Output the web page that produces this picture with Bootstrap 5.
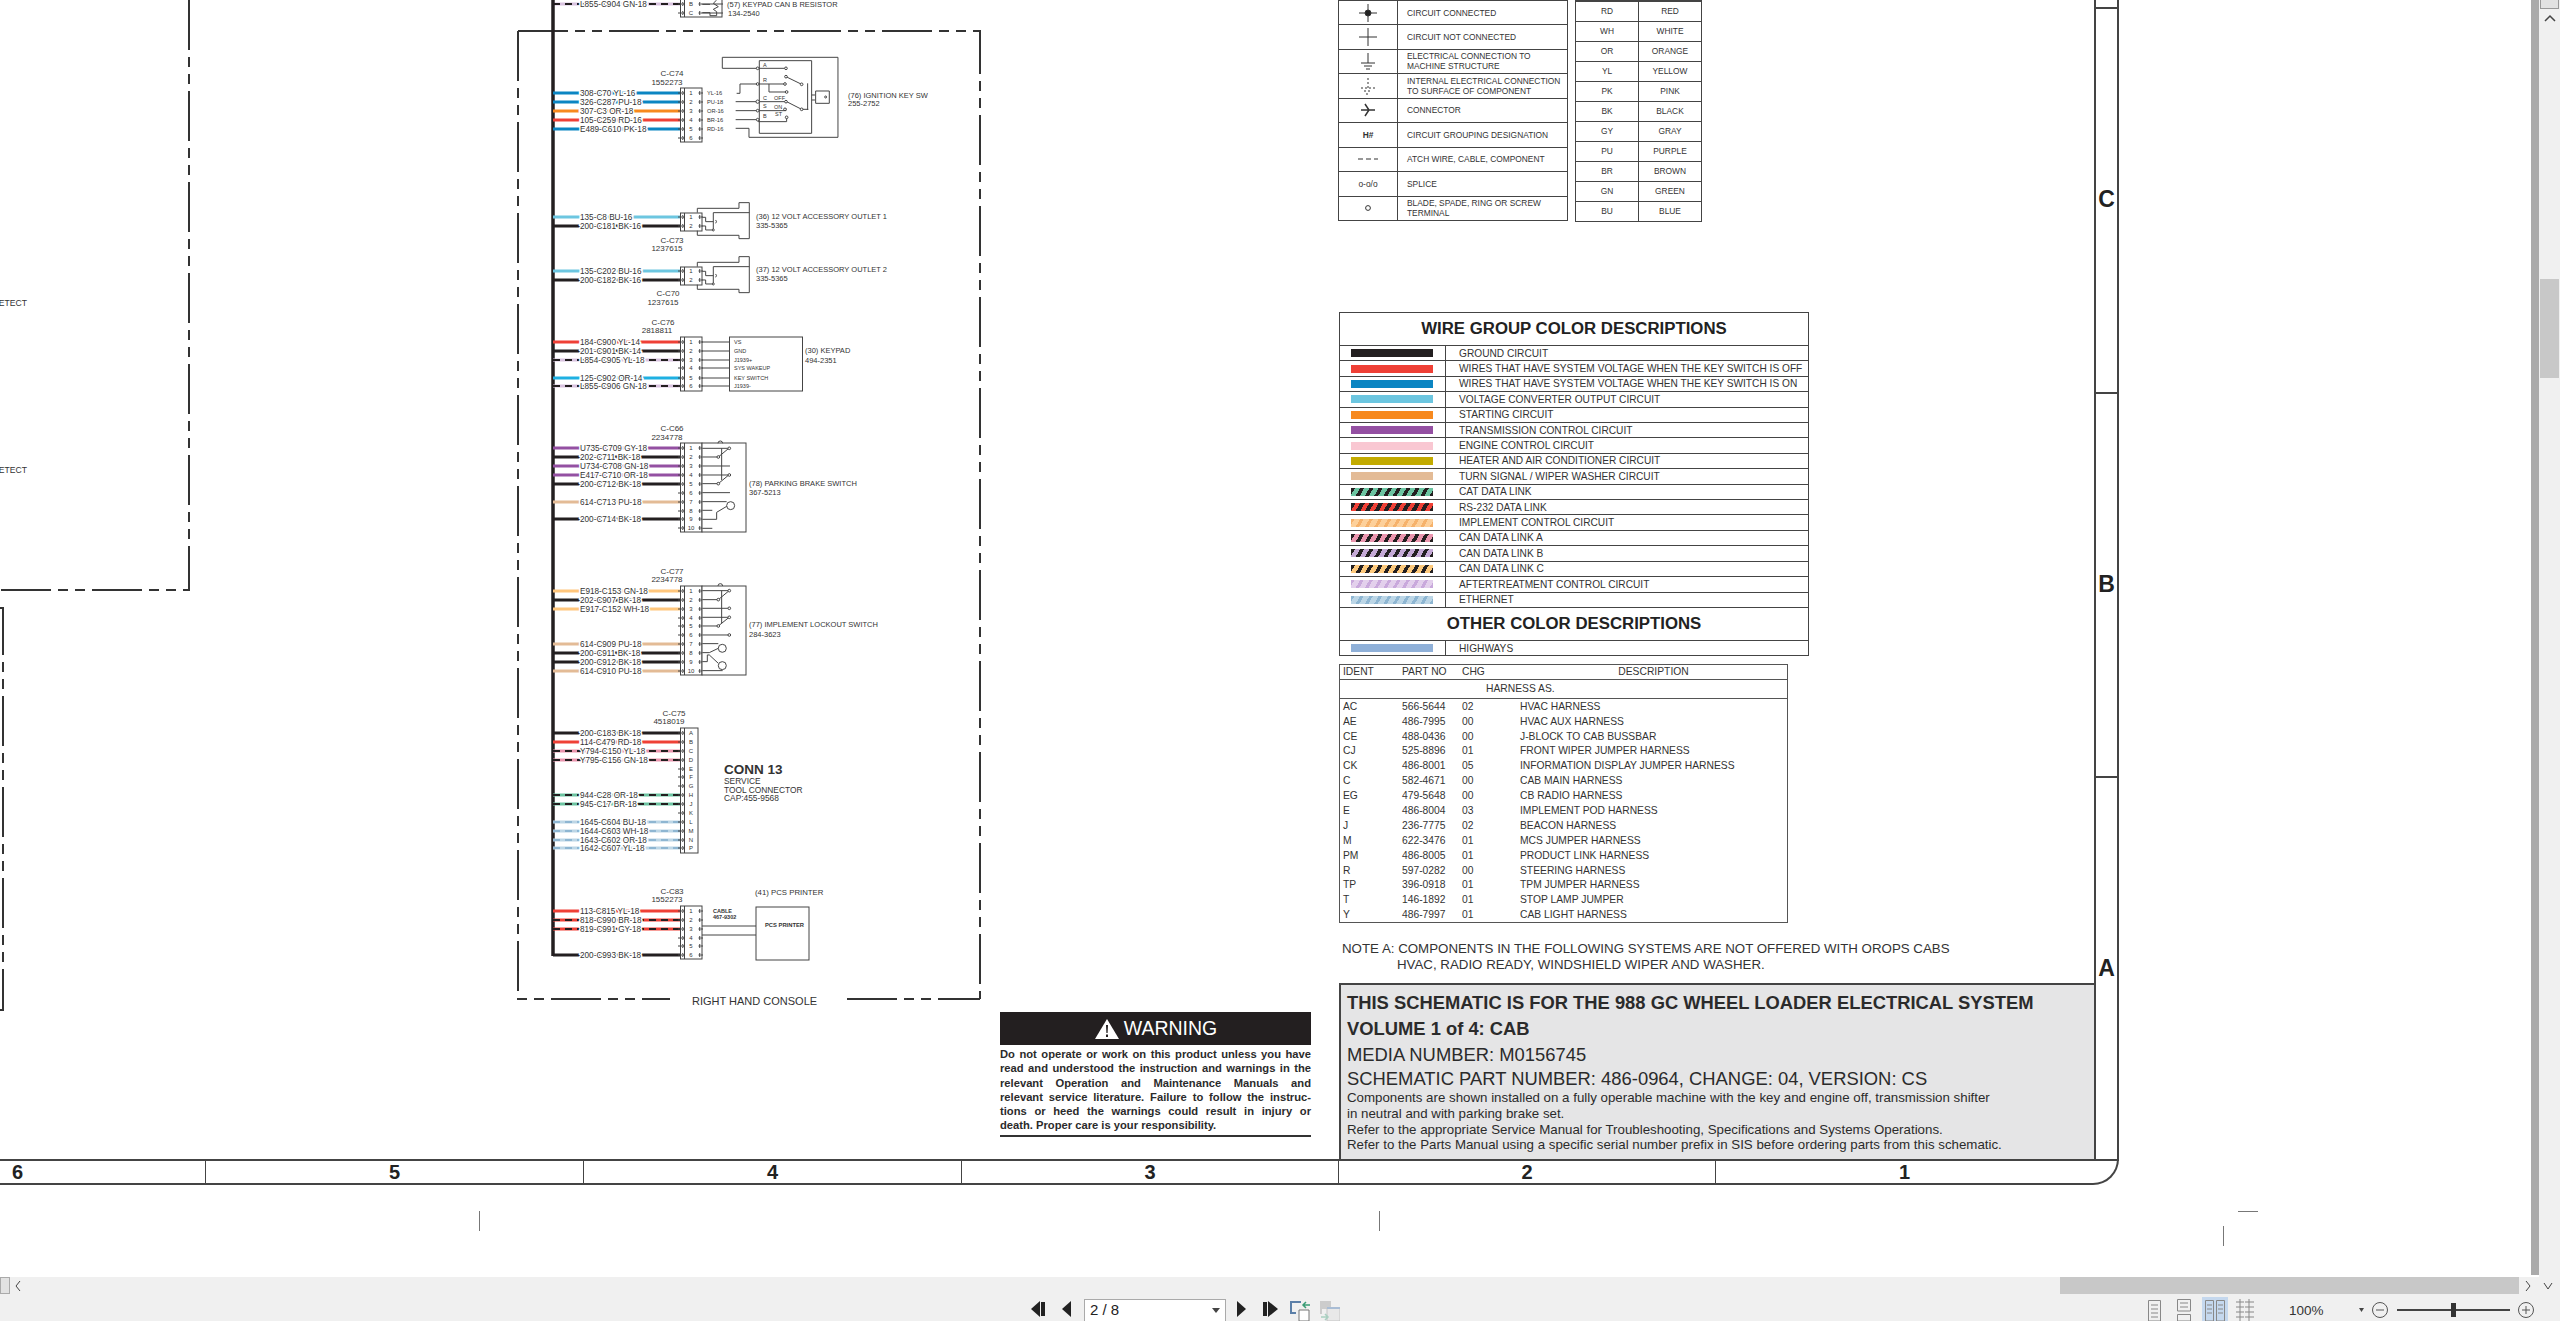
<!DOCTYPE html>
<html lang="en">
<head>
<meta charset="UTF-8">
<meta name="viewport" content="width=device-width, initial-scale=1.0">
<title>988 GC Wheel Loader Electrical System - Volume 1 of 4</title>
<link href="https://cdn.jsdelivr.net/npm/bootstrap@5.3.0/dist/css/bootstrap.min.css" rel="stylesheet">
<style>
    body { font-family: "Liberation Sans", Arial, sans-serif; color: #333; background: #fff; }
    .sheet { background: #fff; }
    .sheet-svg { position: absolute; left: 0; top: 0; }
    .sheet-svg text { font-family: "Liberation Sans", Arial, sans-serif; fill: #333; }
    .on-sheet { position: absolute; }

    /* symbol + colour code tables */
    .pos-sym { left: 1338px; top: -1px; width: 230px; }
    .pos-code { left: 1575px; top: 0; width: 127px; }
    .sym-tbl { border-collapse: collapse; table-layout: fixed; font-size: 8.4px; line-height: 10px; color: #333; }
    .sym-tbl td { border: 1px solid #444; padding: 0; vertical-align: middle; background: #fff; color: #333; }
    .pos-sym tr { height: 24.5px; }
    .pos-code tr { height: 20px; }
    .sym-ico { width: 59px; text-align: center; }
    .sym-txt { padding-left: 9px !important; }
    .pos-code td { text-align: center; width: 50%; }
    .top-thick td { border-top: 2px solid #444; }

    /* wire group table */
    .pos-wire { left: 1339px; top: 312px; width: 470px; border: 1px solid #444; font-size: 10.16px; }
    .wire-head { height: 32px; font-size: 16.8px; font-weight: 700; color: #222; }
    .wire-row { height: 15.41px; border-top: 1px solid #444; }
    .wire-swatch { width: 106px; height: 100%; border-right: 1px solid #444; padding-left: 11px; }
    .wire-swatch span { display: block; width: 82px; height: 8px; }
    .wire-name { padding-left: 13px; white-space: nowrap; }
    .wire-head.other { height: 33px; border-top: 1px solid #444; }
    .sw-gnd { background: #231f20; } .sw-off { background: #ef4036; } .sw-on { background: #0b85c2; }
    .sw-conv { background: #6cc6e0; } .sw-start { background: #f7891e; } .sw-trans { background: #9450a2; }
    .sw-eng { background: #f9c7d2; } .sw-hvac { background: #c3ab00; } .sw-turn { background: #e3bb96; }
    .sw-high { background: #8fb0d8; }
    .sw-cat { background: repeating-linear-gradient(120deg, #231f20 0 3.5px, #6cc4a1 3.5px 8px); }
    .sw-rs { background: repeating-linear-gradient(120deg, #231f20 0 4px, #ef4036 4px 8px); }
    .sw-impl { background: repeating-linear-gradient(120deg, #f6b26b 0 3px, #fdd09a 3px 8px); }
    .sw-cana { background: repeating-linear-gradient(120deg, #231f20 0 3.5px, #ea95ae 3.5px 8px); }
    .sw-canb { background: repeating-linear-gradient(120deg, #231f20 0 3.5px, #c5a9d6 3.5px 8px); }
    .sw-canc { background: repeating-linear-gradient(120deg, #231f20 0 3.5px, #fdc97c 3.5px 8px); }
    .sw-after { background: repeating-linear-gradient(120deg, #c9a9dc 0 3px, #e3d0ec 3px 8px); }
    .sw-eth { background: repeating-linear-gradient(120deg, #8eb6d2 0 3px, #bcd6e6 3px 8px); }

    /* harness table */
    .pos-harn { left: 1339px; top: 664px; width: 449px; height: 259px; border: 1px solid #555; font-size: 10.3px; }
    .harn-top { height: 15px; border-bottom: 1px solid #555; }
    .harn-sub { height: 19px; border-bottom: 1px solid #555; padding-left: 146px; }
    .harn-row { height: 14.9px; white-space: nowrap; }
    .c-ident { width: 62px; padding-left: 3px; }
    .c-part { width: 60px; }
    .c-chg { width: 58px; }

    .pos-note { left: 1342px; top: 941px; font-size: 13.3px; line-height: 16px; white-space: nowrap; }
    .note-2 { padding-left: 55px; }

    /* warning */
    .pos-warn { left: 1000px; top: 1012px; width: 311px; border-bottom: 2px solid #333; height: 125px; }
    .warn-head { height: 33px; background: #231f20; color: #fff; font-size: 19.5px; }
    .warn-body { font-size: 11.2px; line-height: 14.3px; font-weight: 700; color: #2b2b2b; padding-top: 2px; white-space: nowrap; }
    .warn-fill { text-align: justify; text-align-last: justify; white-space: normal; }

    /* title block */
    .pos-info { left: 1339px; top: 983px; width: 757px; height: 178px; background: #e5e5e6; border: 2px solid #444; padding: 5px 5px 0 6px; color: #2b2b2b; white-space: nowrap; }
    .info-b { font-size: 18.37px; font-weight: 700; line-height: 25px; }
    .info-b2 { line-height: 27px; }
    .info-m { font-size: 18.4px; line-height: 26px; }
    .info-l { font-size: 18.4px; line-height: 22px; }
    .info-s { font-size: 13.3px; line-height: 15.8px; }

    /* sheet frame */
    .pos-strip { left: -2px; top: 1159px; width: 2121px; height: 26px; border: 2px solid #444; border-bottom-right-radius: 26px; border-left: 0; font-size: 20px; font-weight: 700; color: #222; }
    .strip-cell { border-right: 1px solid #444; height: 100%; }
    .strip-first { padding-left: 14px; }
    .strip-last { padding-right: 24px; border-right: 0; }
    .pos-frame { left: 2094px; top: -10px; width: 25px; height: 1171px; border-left: 2px solid #444; border-right: 2px solid #444; font-size: 23px; font-weight: 700; color: #222; }
    .zone { border-top: 2px solid #444; height: 385px; padding-bottom: 2px; }
    .zone-top { height: 17px; border-top: 0; }
    .tick { position: absolute; background: #777; width: 1px; height: 20px; }

    /* viewer chrome */
    .vstrip { width: 8px; background: #aaa; height: 1275px; }
    .vscroll { width: 21px; background: #f0f0f0; padding: 0 1px; }
    .vs-btn { height: 9px; background: #e2e2e2; border: 1px solid #999; border-top: 0; }
    .vs-up { height: 18px; }
    .vs-thumb { height: 99px; background: #c8c8c8; margin-top: 252px; }
    .chrome { background: #f0f0f0; }
    .hscroll { height: 17px; }
    .hs-btn { width: 10px; height: 17px; background: #e2e2e2; border: 1px solid #aaa; }
    .hs-thumb { width: 459px; height: 17px; background: #c8c8c8; }
    .hs-gap { flex: 1; }
    .hs-next { margin-left: 5px; }
    .hs-down { margin: 0 7px 0 11px; }
    .toolbar { height: 27px; padding-left: 1031px; padding-right: 24px; }
    .pager { width: 142px; height: 22px; background: #fff; border: 1px solid #aaa; border-bottom: 0; font-size: 15px; color: #222; padding: 1px 5px; }
    .ml-1 { margin-left: 16px; } .ml-2 { margin-left: 13px; } .ml-3 { margin-left: 11px; }
    .ml-4 { margin-left: 17px; } .ml-5 { margin-left: 12px; } .ml-6 { margin-left: 10px; }
    .zoom-val { margin-left: 31px; width: 38px; font-size: 13.5px; color: #333; }
    .zoom-box { margin-left: 29px; margin-bottom: 2px; }
</style>
</head>
<body class="d-flex flex-column vh-100 overflow-hidden">

<div class="d-flex flex-grow-1 overflow-hidden">
    <div class="sheet flex-grow-1 position-relative overflow-hidden">
        <svg class="sheet-svg" id="diagram" width="2531" height="1277" viewBox="0 0 2531 1277"></svg>

        <table class="on-sheet pos-sym sym-tbl" id="symTable"></table>
        <table class="on-sheet pos-code sym-tbl" id="codeTable"></table>

        <div class="on-sheet pos-wire" id="wireTable"></div>
        <div class="on-sheet pos-harn" id="harnTable"></div>

        <div class="on-sheet pos-note">
            <div>NOTE A: COMPONENTS IN THE FOLLOWING SYSTEMS ARE NOT OFFERED WITH OROPS CABS</div>
            <div class="note-2">HVAC, RADIO READY, WINDSHIELD WIPER AND WASHER.</div>
        </div>

        <div class="on-sheet pos-warn">
            <div class="warn-head d-flex align-items-center justify-content-center gap-1">
                <svg width="26" height="22" viewBox="0 0 26 22"><path d="M13 1 L25 21 H1 Z" fill="#fff"/><path d="M12 7 h2 l-.4 8 h-1.2 Z M12 16.5 h2 v2.5 h-2 Z" fill="#231f20"/></svg>
                <span>WARNING</span>
            </div>
            <div class="warn-body">
                <div class="warn-fill">Do not operate or work on this product unless you have</div>
                <div class="warn-fill">read and understood the instruction and warnings in the</div>
                <div class="warn-fill">relevant Operation and Maintenance Manuals and</div>
                <div class="warn-fill">relevant service literature. Failure to follow the instruc-</div>
                <div class="warn-fill">tions or heed the warnings could result in injury or</div>
                <div>death. Proper care is your responsibility.</div>
            </div>
        </div>

        <div class="on-sheet pos-info">
            <div class="info-b">THIS SCHEMATIC IS FOR THE 988 GC WHEEL LOADER ELECTRICAL SYSTEM</div>
            <div class="info-b info-b2">VOLUME 1 of 4: CAB</div>
            <div class="info-m">MEDIA NUMBER: M0156745</div>
            <div class="info-l">SCHEMATIC PART NUMBER: 486-0964, CHANGE: 04, VERSION: CS</div>
            <div class="info-s">Components are shown installed on a fully operable machine with the key and engine off, transmission shifter</div>
            <div class="info-s">in neutral and with parking brake set.</div>
            <div class="info-s">Refer to the appropriate Service Manual for Troubleshooting, Specifications and Systems Operations.</div>
            <div class="info-s">Refer to the Parts Manual using a specific serial number prefix in SIS before ordering parts from this schematic.</div>
        </div>

        <div class="on-sheet pos-frame d-flex flex-column">
            <div class="zone zone-top"></div>
            <div class="zone d-flex align-items-center justify-content-center">C</div>
            <div class="zone d-flex align-items-center justify-content-center">B</div>
            <div class="zone d-flex align-items-center justify-content-center">A</div>
        </div>

        <div class="on-sheet pos-strip d-flex">
            <div class="strip-cell strip-first d-flex align-items-center" id="cell6">6</div>
            <div class="strip-cell d-flex align-items-center justify-content-center" id="cell5">5</div>
            <div class="strip-cell d-flex align-items-center justify-content-center" id="cell4">4</div>
            <div class="strip-cell d-flex align-items-center justify-content-center" id="cell3">3</div>
            <div class="strip-cell d-flex align-items-center justify-content-center" id="cell2">2</div>
            <div class="strip-cell strip-last d-flex align-items-center justify-content-center flex-grow-1">1</div>
        </div>

        <span class="tick" id="t1"></span><span class="tick" id="t2"></span><span class="tick" id="t3"></span><span class="tick" id="t4"></span>
    </div>
    <div class="vstrip"></div>
    <div class="vscroll">
        <div class="vs-btn"></div>
        <div class="vs-up d-flex align-items-center justify-content-center"><svg width="12" height="8" viewBox="0 0 12 8"><path d="M1 7 L6 2 L11 7" fill="none" stroke="#444" stroke-width="1.5"/></svg></div>
        <div class="vs-thumb"></div>
    </div>
</div>

<div class="chrome">
    <div class="hscroll d-flex align-items-center">
        <div class="hs-btn"></div>
        <svg class="ms-1" width="8" height="12" viewBox="0 0 8 12"><path d="M6 1 L2 6 L6 11" fill="none" stroke="#444" stroke-width="1"/></svg>
        <div class="hs-gap"></div>
        <div class="hs-thumb"></div>
        <svg class="hs-next" width="8" height="12" viewBox="0 0 8 12"><path d="M2 1 L6 6 L2 11" fill="none" stroke="#444" stroke-width="1"/></svg>
        <svg class="hs-down" width="10" height="8" viewBox="0 0 10 8"><path d="M1 1 L5 7 L9 1" fill="none" stroke="#444" stroke-width="1"/></svg>
    </div>
    <div class="toolbar d-flex align-items-end">
        <svg class="mb-1" width="15" height="16" viewBox="0 0 15 16"><path d="M9 0 V16 L0 8 Z M10 1 H14 V15 H10 Z" fill="#222"/></svg>
        <svg class="mb-1 ml-1" width="9" height="16" viewBox="0 0 9 16"><path d="M9 0 V16 L0 8 Z" fill="#222"/></svg>
        <div class="pager ml-2 d-flex align-items-center justify-content-between">
            <span>2 / 8</span>
            <svg width="8" height="5" viewBox="0 0 8 5"><path d="M0 0 H8 L4 5 Z" fill="#444"/></svg>
        </div>
        <svg class="mb-1 ml-3" width="9" height="16" viewBox="0 0 9 16"><path d="M0 0 V16 L9 8 Z" fill="#222"/></svg>
        <svg class="mb-1 ml-4" width="15" height="16" viewBox="0 0 15 16"><path d="M5 0 V16 L15 8 Z M0 1 H4 V15 H0 Z" fill="#222"/></svg>
        <svg class="ml-5" width="20" height="21" viewBox="0 0 20 21">
            <path d="M0 1 H11 V3 H2 V12 H6 V14 H0 Z" fill="#5b7fa8"/><path d="M9 10 H19 V21 H9 Z" fill="#fff" stroke="#777"/><path d="M20 5 H13 M16 2 L13 5 L16 8" fill="none" stroke="#3a9c75" stroke-width="1.5"/>
        </svg>
        <svg class="ml-6" width="20" height="21" viewBox="0 0 20 21">
            <path d="M0 1 H11 V9 H2 V14 H0 Z" fill="#ccc"/><path d="M7 8 H20 V21 H7 Z" fill="#e8e8e8" stroke="#c4c4c4"/><path d="M7 8 H20" stroke="#a9bdd5" stroke-width="2"/><path d="M1 17 H8 M5 14 L8 17 L5 20" fill="none" stroke="#a9cfc0" stroke-width="1.5"/>
        </svg>

        <svg class="ms-auto" width="112" height="24" viewBox="0 0 112 24">
            <rect x="56" y="0" width="26" height="24" fill="#c5d8ee"/>
            <g fill="none" stroke="#888">
                <path d="M2.5 3.5 H14.5 V24 H2.5 Z M5 8 H12 M5 12 H12 M5 16 H12 M5 20 H12"/>
                <path d="M31.5 2.5 H44.5 V14 H31.5 Z M31.5 17.5 H44.5 V24 H31.5 Z M34 6 H42 M34 10 H42"/>
                <path d="M59.5 3.5 H67.5 V24 H59.5 Z M70.5 3.5 H78.5 V24 H70.5 Z M61 8 H66 M61 12 H66 M61 16 H66 M72 8 H77 M72 12 H77 M72 16 H77"/>
                <path d="M94 2 V24 M103 2 V24 M90 5 H98 M99 5 H108 M90 10 H98 M99 10 H108 M90 15 H98 M99 15 H108 M90 20 H98 M99 20 H108"/>
            </g>
        </svg>
        <span class="zoom-val">100%</span>
        <svg class="zoom-box" width="180" height="18" viewBox="0 0 180 18">
            <path d="M3 7 H8 L5.5 11 Z" fill="#444"/>
            <circle cx="24" cy="9" r="7.5" fill="none" stroke="#555"/><path d="M20 9 H28" stroke="#555"/>
            <path d="M41 9 H154" stroke="#444" stroke-width="2"/><rect x="95" y="2" width="5" height="14" fill="#333"/>
            <circle cx="170" cy="9" r="7.5" fill="none" stroke="#555"/><path d="M166 9 H174 M170 5 V13" stroke="#555"/>
        </svg>
    </div>
</div>

<script>
    // palette of the wire groups
    const C = {
        bk: '#231f20', rd: '#ef4036', bl: '#0b85c2', cy: '#6cc6e0', or: '#f7891e', pu: '#9450a2', tn: '#e3bb96',
        li: '#ffc67c', sky: '#1eb0e2', cana: '#ea95ae', canb: '#d9c3e0', cat: '#6cc4a1', eth: '#bcd6e6', rs: '#ef4036'
    };
    const LINE = '#444';
    const BLACK_DASH = '#231f20';
    let svg = '';

    function txt(x, y, s, size, extra) {
        svg += `<text x="${x}" y="${y}" dy=".35em" font-size="${size}" ${extra || ''}>${s}</text>`;
    }
    function wire(y, label, color, dashColor) {
        svg += `<path d="M553 ${y} H680" stroke="${color}" stroke-width="3" fill="none"/>`;
        if (dashColor) svg += `<path d="M553 ${y} H680" stroke="${dashColor}" stroke-width="1.8" stroke-dasharray="7 5" fill="none"/>`;
        svg += `<text x="580" y="${y}" dy=".35em" font-size="8.2" stroke="#fff" stroke-width="3" paint-order="stroke">${label}</text>`;
    }
    function connBox(top, bot, right, pinYs, names) {
        svg += `<g fill="none" stroke="${LINE}"><rect x="680.5" y="${top}" width="${right - 680.5}" height="${bot - top}" fill="#fff"/><path d="M684.5 ${top} V${bot}"/>`;
        pinYs.forEach(y => {
            svg += `<path d="M682.5 ${y - 2} q2 2 0 4 M678 ${y} H683"/>`;
            if (right > 699) svg += `<path d="M700 ${y - 2} q-2 2 0 4 M699 ${y} H${right + 1}"/>`;
        });
        svg += '</g>';
        pinYs.forEach((y, i) => txt(691, y, names ? names[i] : i + 1, 6, 'text-anchor="middle"'));
    }
    // device artwork drawn in the 3x crop coordinates it was measured from
    function art(ox, oy, d, circles) {
        svg += `<g transform="translate(${ox} ${oy}) scale(.3333)" fill="none" stroke="${LINE}" stroke-width="3"><path d="${d}"/>`;
        (circles || []).forEach(c => { svg += `<circle cx="${c[0]}" cy="${c[1]}" r="${c[2] || 4}" fill="#fff"/>`; });
        svg += '</g>';
    }
    function group(name, part, nameX, partX, nameY, partY) {
        txt(nameX, nameY, name, 8, 'text-anchor="middle"');
        txt(partX, partY, part, 8, 'text-anchor="middle"');
    }

    // dashed boxes
    const dash = 'fill="none" stroke="#333" stroke-width="2" stroke-dasharray="50 7 10 7 10 7"';
    svg += `<path d="M518 31 H980 V999" ${dash}/>`;
    svg += `<path d="M518 31 V999 H670" ${dash}/>`;
    svg += `<path d="M847 999 H980" ${dash}/>`;
    svg += `<path d="M189 0 V590 H0" ${dash}/>`;
    svg += `<path d="M0 608 H3 V1010 H0" ${dash}/>`;
    txt(27, 303, 'ETECT', 8.6, 'text-anchor="end"');
    txt(27, 470, 'ETECT', 8.6, 'text-anchor="end"');
    txt(692, 1001, 'RIGHT HAND CONSOLE', 11);

    // keypad resistor cut by the top of the view
    wire(4, 'L855-C904 GN-18', C.canb, BLACK_DASH);
    connBox(-6, 17, 722, [4, 13], ['B', 'C']);
    art(500, 0, 'M607 13 H630 M607 38 H630 V47 H650 V35 L640 28 L655 20 L640 10 L650 0');
    txt(727, 4, '(57) KEYPAD CAN B RESISTOR', 7.5);
    txt(728, 13, '134-2540', 7.5);

    // main bus
    svg += `<path d="M553 0 V956" stroke="#231f20" stroke-width="3.5" fill="none"/>`;

    // ignition key switch
    group('C-C74', '1552273', 672, 667, 73, 82);
    wire(93, '308-C70 YL-16', C.bl); wire(102, '326-C287 PU-18', C.bl); wire(111, '307-C3 OR-18', C.or);
    wire(120, '105-C259 RD-16', C.rd); wire(129, 'E489-C610 PK-18', C.bl);
    connBox(88, 142, 702, [93, 102, 111, 120, 129, 138]);
    ['YL-16', 'PU-18', 'OR-16', 'BR-16', 'RD-16'].forEach((s, i) => txt(707, 93 + i * 9, s, 5.7));
    art(500, 0, 'M667 205 V172 H1014 V412 H747 V385 H707 M667 205 H858 M778 182 H935 V400 H778 Z M710 280 H720 V252 H855 M807 252 V276 H860 M707 305 H858 M707 332 H858 L858 325 M707 359 H775 V365 H860 V352 M858 230 L905 253 M923 250 V330 M860 305 L905 328 L925 328 M945 285 H935 M945 300 H935 M947 273 H988 V310 H947 Z',
        [[773, 205], [858, 205], [773, 252], [855, 252], [860, 276], [858, 230], [905, 253], [773, 305, 5], [858, 305], [905, 328], [773, 332], [855, 328], [773, 359], [860, 352], [977, 291, 3]]);
    txt(763, 65, 'A', 5.5); txt(763, 80, 'R', 5.5); txt(763, 98, 'C', 5.5); txt(763, 106, 'S', 5.5); txt(763, 116, 'B', 5.5);
    txt(774, 98, 'OFF', 5.5); txt(774, 107, 'ON', 5.5); txt(775, 114, 'ST', 5.5);
    txt(848, 95, '(76) IGNITION KEY SW', 7.5); txt(848, 103, '255-2752', 7.5);

    // accessory outlets
    const outlet = 'M592 638 V625 H717 V608 H748 V716 H717 V706 H592 V692 M640 638 H748 M640 638 V690 M607 652 H617 V665 H640 M607 678 H617 V690 H640 M647 660 q5 5 0 10';
    wire(217, '135-C8 BU-16', C.cy); wire(226, '200-C181 BK-16', C.bk);
    connBox(213, 231, 702, [217, 226]);
    art(500, 0, outlet, [[640, 690, 3]]);
    group('C-C73', '1237615', 672, 667, 240, 248);
    txt(756, 216, '(36) 12 VOLT ACCESSORY OUTLET 1', 7.5); txt(756, 225, '335-5365', 7.5);

    wire(271, '135-C202 BU-16', C.cy); wire(280, '200-C182 BK-16', C.bk);
    connBox(267, 285, 702, [271, 280]);
    art(500, 54, outlet, [[640, 690, 3]]);
    group('C-C70', '1237615', 668, 663, 293, 302);
    txt(756, 269, '(37) 12 VOLT ACCESSORY OUTLET 2', 7.5); txt(756, 278, '335-5365', 7.5);

    // keypad
    group('C-C76', '2818811', 663, 657, 322, 330);
    wire(342, '184-C900 YL-14', C.rd); wire(351, '201-C901 BK-14', C.bk); wire(360, 'L854-C905 YL-18', C.canb, BLACK_DASH);
    wire(378, '125-C902 OR-14', C.sky); wire(386, 'L855-C906 GN-18', C.canb, BLACK_DASH);
    connBox(337, 391, 702, [342, 351, 360, 368, 378, 386]);
    svg += `<rect x="729.5" y="337" width="73" height="54" fill="#fff" stroke="${LINE}"/>`;
    [342, 351, 360, 368, 378, 386].forEach(y => { svg += `<path d="M702 ${y} H729" stroke="${LINE}"/>`; });
    ['VS', 'GND', 'J1939+', 'SYS WAKEUP', 'KEY SWITCH', 'J1939-'].forEach((s, i) => txt(734, [342, 351, 360, 368, 378, 386][i], s, 5.5));
    txt(805, 350, '(30) KEYPAD', 7.5); txt(805, 360, '494-2351', 7.5);

    // parking brake switch
    group('C-C66', '2234778', 672, 667, 428, 437);
    wire(448, 'U735-C709 GY-18', C.pu); wire(457, '202-C711 BK-18', C.bk); wire(466, 'U734-C708 GN-18', C.pu);
    wire(475, 'E417-C710 OR-18', C.pu); wire(484, '200-C712 BK-18', C.bk); wire(502, '614-C713 PU-18', C.tn); wire(519, '200-C714 BK-18', C.bk);
    const p10 = [448, 457, 466, 475, 484, 493, 502, 511, 519, 528];
    connBox(443, 532, 702, p10);
    svg += `<rect x="702" y="443" width="44" height="89" fill="#fff" stroke="${LINE}"/>`;
    art(500, 340, 'M607 325 H688 M607 351 H655 L690 322 M607 378 H690 M607 405 H688 M607 431 H655 L690 402 M607 458 H690 M665 325 V420 M654 310 a7 7 0 0 1 14 0 M607 485 H680 M607 511 H637 M607 538 H650 V517 L682 498 M607 565 H637',
        [[688, 325], [655, 351], [688, 405], [655, 431], [692, 497, 12]]);
    txt(749, 483, '(78) PARKING BRAKE SWITCH', 7.5); txt(749, 492, '367-5213', 7.5);

    // implement lockout switch
    group('C-C77', '2234778', 672, 667, 571, 579);
    wire(591, 'E918-C153 GN-18', C.li); wire(600, '202-C907 BK-18', C.bk); wire(609, 'E917-C152 WH-18', C.li);
    wire(644, '614-C909 PU-18', C.tn); wire(653, '200-C911 BK-18', C.bk); wire(662, '200-C912 BK-18', C.bk); wire(671, '614-C910 PU-18', C.tn);
    connBox(586, 675, 702, [591, 600, 609, 618, 626, 635, 644, 653, 662, 671]);
    svg += `<rect x="702" y="586" width="44" height="89" fill="#fff" stroke="${LINE}"/>`;
    art(500, 340, 'M607 752 H688 M607 779 H655 L690 750 M607 805 H688 M607 832 H688 M607 858 H655 L690 830 M607 885 H688 M665 752 V850 M654 738 a7 7 0 0 1 14 0 M607 911 H655 M607 938 H628 L655 925 M607 965 H622 V945 H628 L655 970 M607 992 H668',
        [[688, 752], [655, 779], [688, 805], [688, 832], [655, 858], [688, 885], [667, 925, 12], [667, 977, 12]]);
    txt(749, 624, '(77) IMPLEMENT LOCKOUT SWITCH', 7.5); txt(749, 634, '284-3623', 7.5);

    // service tool connector
    group('C-C75', '4518019', 674, 669, 713, 721);
    wire(733, '200-C183 BK-18', C.bk); wire(742, '114-C479 RD-18', C.rd); wire(751, 'Y794-C150 YL-18', C.cana, BLACK_DASH); wire(760, 'Y795-C156 GN-18', C.cana, BLACK_DASH);
    wire(795, '944-C28 OR-18', C.cat, BLACK_DASH); wire(804, '945-C17 BR-18', C.cat, BLACK_DASH);
    wire(822, '1645-C604 BU-18', C.eth, '#8eb6d2'); wire(831, '1644-C603 WH-18', C.eth, '#8eb6d2'); wire(840, '1643-C602 OR-18', C.eth, '#8eb6d2'); wire(848, '1642-C607 YL-18', C.eth, '#8eb6d2');
    connBox(728, 853, 698, [733, 742, 751, 760, 769, 777, 786, 795, 804, 813, 822, 831, 840, 848], 'ABCDEFGHJKLMNP'.split(''));
    txt(724, 769, 'CONN 13', 13.5, 'font-weight="700"');
    txt(724, 781, 'SERVICE', 8.4); txt(724, 790, 'TOOL CONNECTOR', 8.4); txt(724, 798, 'CAP:455-9568', 8.4);

    // printer
    group('C-C83', '1552273', 672, 667, 891, 899);
    wire(911, '113-C815 YL-18', C.rd); wire(920, '818-C990 BR-18', C.rs, BLACK_DASH); wire(929, '819-C991 GY-18', C.rs, BLACK_DASH); wire(955, '200-C993 BK-18', C.bk);
    connBox(906, 959, 702, [911, 920, 929, 938, 946, 955]);
    svg += `<rect x="756" y="907" width="53" height="53" fill="#fff" stroke="${LINE}"/><path d="M702 926 H756 M702 935 H756" stroke="${LINE}"/>`;
    txt(713, 911, 'CABLE', 5.5, 'font-weight="700"'); txt(713, 917, '467-9302', 5.5, 'font-weight="700"');
    txt(765, 925, 'PCS PRINTER', 5.8, 'font-weight="700"');
    txt(755, 892, '(41) PCS PRINTER', 7.8);

    document.getElementById('diagram').innerHTML = svg;

    // symbol table
    const ico = d => `<svg width="24" height="20" viewBox="0 0 24 20" fill="none" stroke="#333">${d}</svg>`;
    const ground = 'M12 2 V12 M5 12 H19 M8 15 H16 M10 18 H14';
    const symRows = [
        [ico('<path d="M12 1 V19 M3 10 H21"/><circle cx="12" cy="10" r="3" fill="#222"/>'), 'CIRCUIT CONNECTED'],
        [ico('<path d="M12 1 V19 M3 10 H21"/>'), 'CIRCUIT NOT CONNECTED'],
        [ico(`<path d="${ground}"/>`), 'ELECTRICAL CONNECTION TO<br>MACHINE STRUCTURE'],
        [ico(`<path d="${ground}" stroke-dasharray="2 2"/>`), 'INTERNAL ELECTRICAL CONNECTION<br>TO SURFACE OF COMPONENT'],
        [ico('<path d="M5 10 H19 M9 4 L13 10 L9 16" stroke-width="1.5"/>'), 'CONNECTOR'],
        ['<b>H#</b>', 'CIRCUIT GROUPING DESIGNATION'],
        [ico('<path d="M2 10 H22" stroke-width="1.2" stroke-dasharray="5 3"/>'), 'ATCH WIRE, CABLE, COMPONENT'],
        ['<span class="d-inline-block">o-o/o</span>', 'SPLICE'],
        [ico('<circle cx="12" cy="10" r="2.4"/>'), 'BLADE, SPADE, RING OR SCREW<br>TERMINAL']
    ];
    document.getElementById('symTable').innerHTML = symRows.map((r, i) =>
        `<tr class="${i === 0 ? 'top-thick' : ''}"><td class="sym-ico">${r[0]}</td><td class="sym-txt">${r[1]}</td></tr>`).join('');

    const codes = [['RD', 'RED'], ['WH', 'WHITE'], ['OR', 'ORANGE'], ['YL', 'YELLOW'], ['PK', 'PINK'], ['BK', 'BLACK'], ['GY', 'GRAY'], ['PU', 'PURPLE'], ['BR', 'BROWN'], ['GN', 'GREEN'], ['BU', 'BLUE']];
    document.getElementById('codeTable').innerHTML = codes.map((r, i) =>
        `<tr class="${i === 0 ? 'top-thick' : ''}"><td>${r[0]}</td><td>${r[1]}</td></tr>`).join('');

    // wire group table
    const wireRows = [
        ['gnd', 'GROUND CIRCUIT'], ['off', 'WIRES THAT HAVE SYSTEM VOLTAGE WHEN THE KEY SWITCH IS OFF'],
        ['on', 'WIRES THAT HAVE SYSTEM VOLTAGE WHEN THE KEY SWITCH IS ON'], ['conv', 'VOLTAGE CONVERTER OUTPUT CIRCUIT'],
        ['start', 'STARTING CIRCUIT'], ['trans', 'TRANSMISSION CONTROL CIRCUIT'], ['eng', 'ENGINE CONTROL CIRCUIT'],
        ['hvac', 'HEATER AND AIR CONDITIONER CIRCUIT'], ['turn', 'TURN SIGNAL / WIPER WASHER CIRCUIT'], ['cat', 'CAT DATA LINK'],
        ['rs', 'RS-232 DATA LINK'], ['impl', 'IMPLEMENT CONTROL CIRCUIT'], ['cana', 'CAN DATA LINK A'], ['canb', 'CAN DATA LINK B'],
        ['canc', 'CAN DATA LINK C'], ['after', 'AFTERTREATMENT CONTROL CIRCUIT'], ['eth', 'ETHERNET']
    ];
    const wireRow = r => `<div class="wire-row d-flex align-items-center"><div class="wire-swatch d-flex align-items-center"><span class="sw-${r[0]}"></span></div><div class="wire-name">${r[1]}</div></div>`;
    document.getElementById('wireTable').innerHTML =
        '<div class="wire-head d-flex align-items-center justify-content-center">WIRE GROUP COLOR DESCRIPTIONS</div>' +
        wireRows.map(wireRow).join('') +
        '<div class="wire-head other d-flex align-items-center justify-content-center">OTHER COLOR DESCRIPTIONS</div>' +
        wireRow(['high', 'HIGHWAYS']);

    // harness table
    const harness = [
        ['AC', '566-5644', '02', 'HVAC HARNESS'], ['AE', '486-7995', '00', 'HVAC AUX HARNESS'], ['CE', '488-0436', '00', 'J-BLOCK TO CAB BUSSBAR'],
        ['CJ', '525-8896', '01', 'FRONT WIPER JUMPER HARNESS'], ['CK', '486-8001', '05', 'INFORMATION DISPLAY JUMPER HARNESS'], ['C', '582-4671', '00', 'CAB MAIN HARNESS'],
        ['EG', '479-5648', '00', 'CB RADIO HARNESS'], ['E', '486-8004', '03', 'IMPLEMENT POD HARNESS'], ['J', '236-7775', '02', 'BEACON HARNESS'],
        ['M', '622-3476', '01', 'MCS JUMPER HARNESS'], ['PM', '486-8005', '01', 'PRODUCT LINK HARNESS'], ['R', '597-0282', '00', 'STEERING HARNESS'],
        ['TP', '396-0918', '01', 'TPM JUMPER HARNESS'], ['T', '146-1892', '01', 'STOP LAMP JUMPER'], ['Y', '486-7997', '01', 'CAB LIGHT HARNESS']
    ];
    document.getElementById('harnTable').innerHTML =
        '<div class="harn-top d-flex align-items-center"><span class="c-ident">IDENT</span><span class="c-part">PART NO</span><span class="c-chg">CHG</span><span class="ms-auto flex-grow-1 text-center" >DESCRIPTION</span></div>' +
        '<div class="harn-sub d-flex align-items-center">HARNESS AS.</div><div>' +
        harness.map(r => `<div class="harn-row d-flex align-items-center"><span class="c-ident">${r[0]}</span><span class="c-part">${r[1]}</span><span class="c-chg">${r[2]}</span><span>${r[3]}</span></div>`).join('') + '</div>';

    // zone cells and stray tick marks on the page edge
    [['cell6', 208], ['cell5', 378], ['cell4', 378], ['cell3', 377], ['cell2', 377]].forEach(c => {
        document.getElementById(c[0]).style.width = c[1] + 'px';
    });
    [['t1', 479, 1211], ['t2', 1379, 1211], ['t3', 2223, 1226]].forEach(t => {
        const el = document.getElementById(t[0]);
        el.style.left = t[1] + 'px';
        el.style.top = t[2] + 'px';
    });
    const dashMark = document.getElementById('t4');
    dashMark.style.cssText = 'left:2238px;top:1211px;width:20px;height:1px;';
</script>
<script src="https://cdn.jsdelivr.net/npm/bootstrap@5.3.0/dist/js/bootstrap.bundle.min.js"></script>
</body>
</html>
